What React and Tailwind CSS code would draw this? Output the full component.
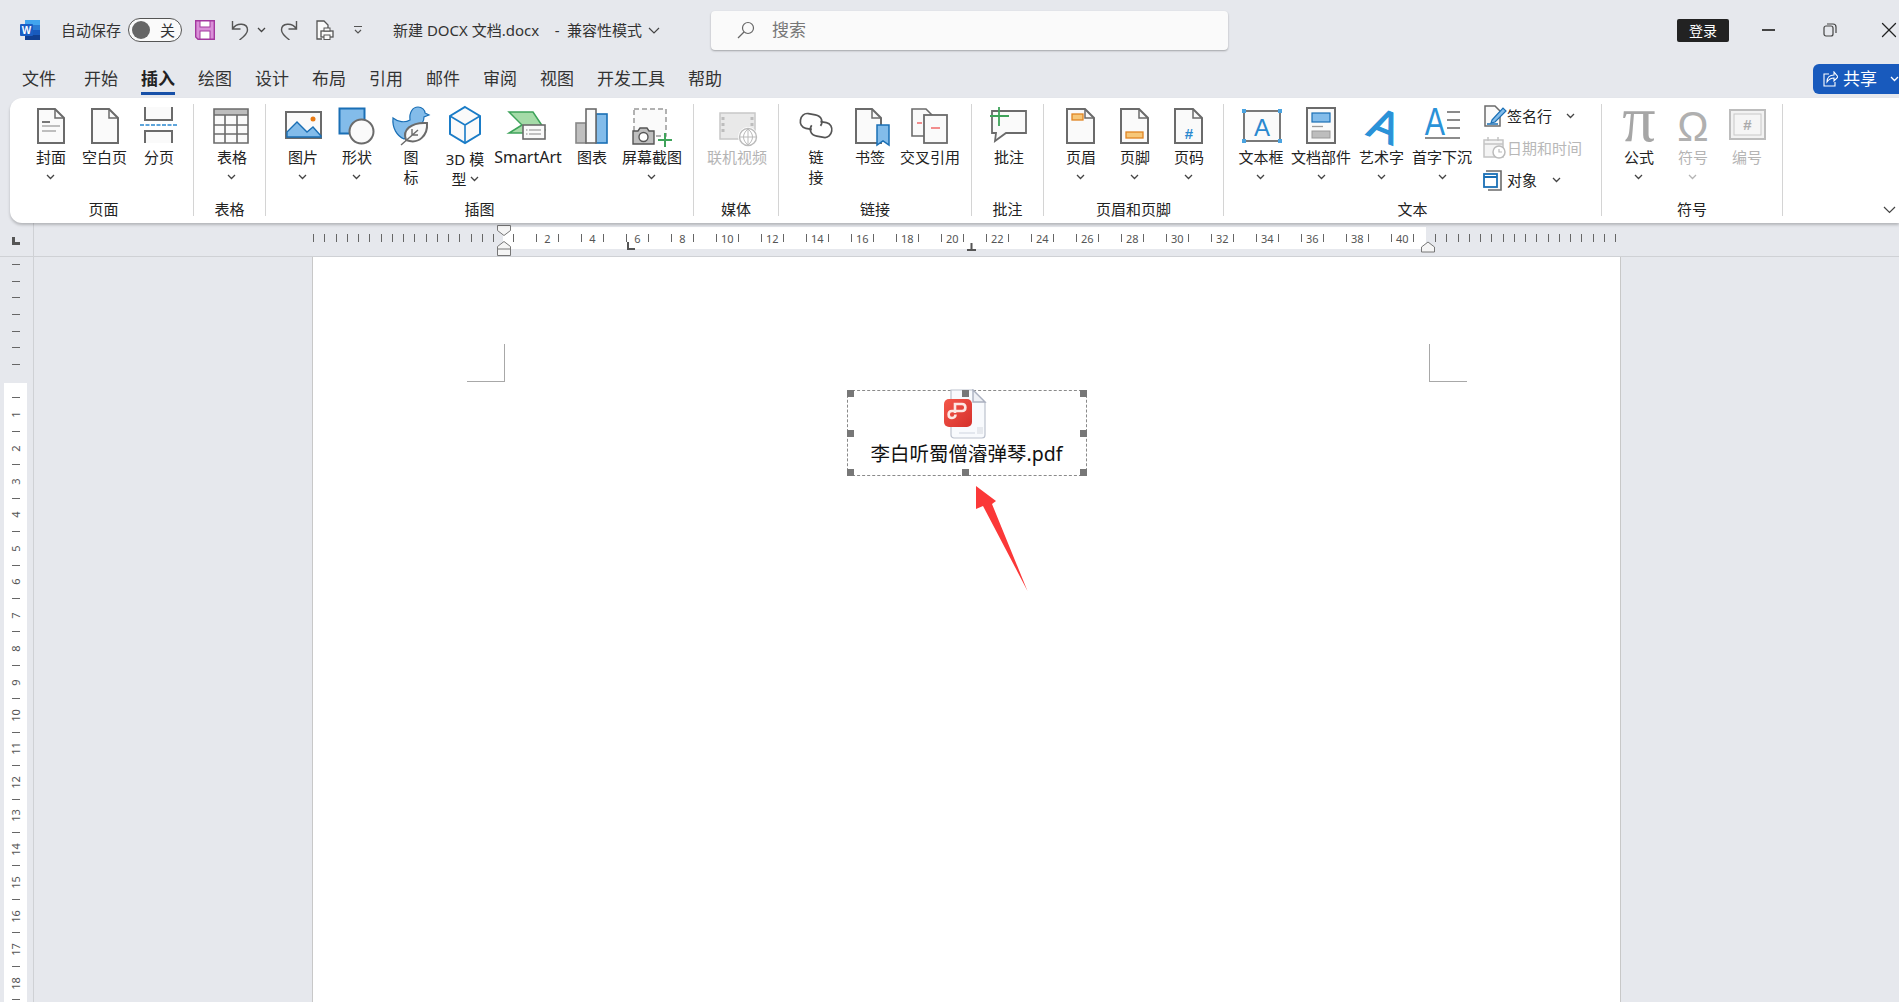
import React from "react";
import { X } from "lucide-react";

const GRAY = "#6b6b6b";
const BLUE = "#1a6fb5";
const SKY = "#83bcea";

function Ic({ children }) {
  return (
    <svg width="40" height="40" viewBox="0 0 40 40" className="overflow-visible shrink-0">
      {children}
    </svg>
  );
}

function Doc({ x = 7, w = 26, children }) {
  return (
    <>
      <path d={`M${x} 3h${w - 9}l9 9v25h-${w}z`} fill="#fafafa" stroke={GRAY} strokeWidth="2" />
      <path d={`M${x + w - 9} 3v9h9`} fill="none" stroke={GRAY} strokeWidth="1.5" />
      {children}
    </>
  );
}

function Chev({ color = "#444" }) {
  return (
    <svg width="9" height="6" viewBox="0 0 9 6" className="shrink-0">
      <path d="M1 1l3.5 3.5L8 1" fill="none" stroke={color} strokeWidth="1.3" />
    </svg>
  );
}

const icons = {
  cover: (
    <Ic>
      <Doc>
        <path d="M11 15h8v2h-8z" fill="#777" />
        <path d="M11 20h18M11 25h14" stroke="#aaa" strokeWidth="1.6" />
      </Doc>
    </Ic>
  ),
  blank: <Ic><Doc /></Ic>,
  pagebreak: (
    <Ic>
      <path d="M6 1v13h27V1M6 37V25h27v12" fill="#fafafa" stroke={GRAY} strokeWidth="2" />
      <path d="M1 19h37" stroke="#2a88cf" strokeWidth="1.5" strokeDasharray="4 1.5" />
    </Ic>
  ),
  table: (
    <Ic>
      <rect x="2" y="3" width="34" height="34" fill="#fafafa" />
      <rect x="2" y="3" width="34" height="6" fill="#bdbdbd" />
      <path d="M2 3h34v34H2zM2 9h34M2 19h34M2 28h34M13 9v28M25 9v28" fill="none" stroke={GRAY} strokeWidth="1.6" />
    </Ic>
  ),
  picture: (
    <Ic>
      <rect x="3" y="6" width="35" height="26" fill="#fafafa" stroke={GRAY} strokeWidth="2" />
      <path d="M4 31V26l10-10 10 10 6-5 8 9v1z" fill={SKY} stroke={BLUE} strokeWidth="1.4" />
      <circle cx="30" cy="13" r="2.5" fill="#e97a12" />
    </Ic>
  ),
  shapes: (
    <Ic>
      <rect x="2.5" y="2.5" width="25" height="25" fill={SKY} stroke={BLUE} strokeWidth="2" />
      <circle cx="24.5" cy="25.5" r="12" fill="#fafafa" stroke={GRAY} strokeWidth="2" />
    </Ic>
  ),
  iconset: (
    <Ic>
      <path d="M2 12c5 4 12 5 17 2-1-8 3-13 8-13 4 0 7 3 7 6l4 2-5 2c0 5-3 8-6 10L13 33C6 30 1 22 2 12z" fill={SKY} stroke={BLUE} strokeWidth="1.2" />
      <path d="M15 34C11 24 20 16 36 17c1 12-8 22-21 17z" fill="#fafafa" stroke={GRAY} strokeWidth="2" />
      <path d="M10 39l17-15M21 29v-6M21 29h6" fill="none" stroke={GRAY} strokeWidth="1.4" />
    </Ic>
  ),
  model: (
    <Ic>
      <path d="M20 1l15 9v18l-15 9-15-9V10z" fill="#fafafa" stroke="#1a7cc7" strokeWidth="2" />
      <path d="M5 10l15 9 15-9M20 19v18" fill="none" stroke="#1a7cc7" strokeWidth="1.6" />
    </Ic>
  ),
  smartart: (
    <Ic>
      <path d="M1 6h24l12 18-7 3H1l13-8z" fill="#a5dba8" stroke="#3ea35a" strokeWidth="1.5" />
      <rect x="15" y="19" width="22" height="14" fill="#fafafa" stroke={GRAY} strokeWidth="1.6" />
      <path d="M21 24h12M21 28h12M18 24h1.5M18 28h1.5" stroke="#888" strokeWidth="1.2" />
    </Ic>
  ),
  chart: (
    <Ic>
      <rect x="4" y="17" width="10" height="20" fill="#bfbfbf" stroke="#888" strokeWidth="1.6" />
      <rect x="24" y="8" width="11" height="29" fill={SKY} stroke={BLUE} strokeWidth="1.6" />
      <rect x="14" y="3" width="10" height="34" fill="#fafafa" stroke={GRAY} strokeWidth="1.6" />
    </Ic>
  ),
  screenshot: (
    <Ic>
      <rect x="2" y="3" width="32" height="27" fill="#fafafa" stroke="#999" strokeWidth="1.5" strokeDasharray="5 3" />
      <path d="M1 25h5l2-3h7l2 3h5v13H1z" fill="#bfbfbf" stroke="#555" strokeWidth="1.4" />
      <circle cx="11.5" cy="31" r="4.5" fill="#fff" stroke="#555" strokeWidth="1.4" />
      <path d="M33 27v14M26 34h14" stroke="#3fa35a" strokeWidth="2" />
    </Ic>
  ),
  video: (
    <Ic>
      <rect x="3" y="7" width="35" height="26" fill="#e9e9e9" stroke="#c8c8c8" strokeWidth="1.5" />
      <path d="M6 11v18M35 11v18" stroke="#bdbdbd" strokeWidth="3" strokeDasharray="3 3" />
      <circle cx="31" cy="31" r="10" fill="#fff" />
      <circle cx="31" cy="31" r="8.5" fill="#fff" stroke="#bbb" strokeWidth="1.4" />
      <path d="M23 31h16M31 23v16M31 23c-6 5-6 11 0 16M31 23c6 5 6 11 0 16" fill="none" stroke="#bbb" strokeWidth="1" />
    </Ic>
  ),
  link: (
    <Ic>
      <path d="M17 23h-6c-9 0-9-15 0-15h7c7 0 9 6 7 10" fill="none" stroke="#555" strokeWidth="1.7" transform="rotate(10 14 16)" />
      <path d="M23 16h6c9 0 9 15 0 15h-7c-7 0-9-6-7-10" fill="none" stroke="#555" strokeWidth="1.7" transform="rotate(10 26 24)" />
    </Ic>
  ),
  bookmark: (
    <Ic>
      <Doc x={6} w={25} />
      <path d="M27 19h12v20l-6-4-6 4z" fill={SKY} stroke={BLUE} strokeWidth="1.5" />
    </Ic>
  ),
  crossref: (
    <Ic>
      <path d="M2 3h14l7 7v20H2z" fill="#fafafa" stroke={GRAY} strokeWidth="1.6" />
      <rect x="14" y="9" width="23" height="28" fill="#fafafa" stroke={GRAY} strokeWidth="1.8" />
      <path d="M7 17h5M21 22h9" stroke="#ef6a6a" strokeWidth="1.6" />
    </Ic>
  ),
  comment: (
    <Ic>
      <path d="M3 5h34v22H17l-11 8 1-8H3z" fill="#fafafa" stroke={GRAY} strokeWidth="1.8" />
      <path d="M10 1v19M1 10h19" stroke="#3fa35a" strokeWidth="1.8" />
    </Ic>
  ),
  header: (
    <Ic>
      <Doc x={6} w={27}>
        <rect x="11" y="8" width="11" height="6" fill="#f6c779" stroke="#e08522" strokeWidth="1.3" />
      </Doc>
    </Ic>
  ),
  footer: (
    <Ic>
      <Doc x={6} w={27}>
        <rect x="11" y="26" width="17" height="6" fill="#f6c779" stroke="#e08522" strokeWidth="1.3" />
      </Doc>
    </Ic>
  ),
  pagenum: (
    <Ic>
      <Doc x={6} w={27}>
        <text x="20" y="33" textAnchor="middle" fontSize="15" fontWeight="700" fontFamily="Liberation Sans" fill="#2a88cf">#</text>
      </Doc>
    </Ic>
  ),
  textbox: (
    <Ic>
      <rect x="3" y="5" width="36" height="30" fill="#fafafa" stroke={GRAY} strokeWidth="1.8" />
      <text x="21" y="30" textAnchor="middle" fontSize="24" fontFamily="Liberation Sans" fill="#2a88cf">A</text>
      <path d="M1 3h4v4H1zM37 3h4v4h-4zM1 33h4v4H1zM37 33h4v4h-4z" fill="#4aa3e0" />
    </Ic>
  ),
  parts: (
    <Ic>
      <rect x="6" y="2" width="28" height="35" fill="#fafafa" stroke={GRAY} strokeWidth="2" />
      <rect x="11" y="7" width="18" height="9" fill={SKY} stroke={BLUE} strokeWidth="1.2" />
      <path d="M11 20.5h11" stroke="#999" strokeWidth="1.3" />
      <rect x="11" y="25" width="18" height="7" fill="#bdbdbd" stroke="#999" strokeWidth="1" />
    </Ic>
  ),
  wordart: (
    <Ic>
      <text x="0" y="0" fontSize="44" fontFamily="Liberation Sans" fill="#2a92d8" stroke="#2a92d8" strokeWidth="1.2" textAnchor="middle" transform="translate(17 34) rotate(22)">A</text>
    </Ic>
  ),
  dropcap: (
    <Ic>
      <text x="0" y="0" textAnchor="middle" fontSize="39" fontFamily="Liberation Sans" fill="#2a92d8" transform="translate(13 29) scale(.78 1)">A</text>
      <path d="M25 6h13M25 14h13M25 22h13" stroke="#666" strokeWidth="1.5" />
      <path d="M3 32h35" stroke="#666" strokeWidth="1.5" />
    </Ic>
  ),
  formula: (
    <Ic>
      <text x="20" y="35" textAnchor="middle" fontSize="66" fontFamily="Liberation Serif" fill="#a6a6a6">π</text>
    </Ic>
  ),
  symbol: (
    <Ic>
      <text x="20" y="35" textAnchor="middle" fontSize="42" fontFamily="Liberation Sans" fill="#b0b0b0">Ω</text>
    </Ic>
  ),
  number: (
    <Ic>
      <rect x="3" y="4" width="35" height="29" fill="#f2f2f2" stroke="#bdbdbd" strokeWidth="2" />
      <rect x="7" y="8" width="27" height="21" fill="#f5f5f5" stroke="#c8c8c8" strokeWidth="1" />
      <text x="20.5" y="24" textAnchor="middle" fontSize="15" fontWeight="700" fontFamily="Liberation Sans" fill="#aaa">#</text>
    </Ic>
  ),
};

const groups = [
  {
    label: "页面", cls: "w-[184px]", pad: "pl-[14px]", labelCls: "pl-[4px]",
    items: [
      { w: "w-[54px]", lines: ["封面"], icon: "cover", chev: true },
      { w: "w-[53px]", lines: ["空白页"], icon: "blank" },
      { w: "w-[56px]", lines: ["分页"], icon: "pagebreak" },
    ],
  },
  {
    label: "表格", cls: "w-[72px]", pad: "pl-[4px]",
    items: [{ w: "w-[68px]", lines: ["表格"], icon: "table", chev: true }],
  },
  {
    label: "插图", cls: "w-[428px]", pad: "pl-[10px]",
    items: [
      { w: "w-[54px]", lines: ["图片"], icon: "picture", chev: true },
      { w: "w-[54px]", lines: ["形状"], icon: "shapes", chev: true },
      { w: "w-[54px]", lines: ["图", "标"], icon: "iconset" },
      { w: "w-[54px]", lines: ["3D 模", "型"], icon: "model", inlineChev: true },
      { w: "w-[72px]", lines: ["SmartArt"], icon: "smartart", text: "text-[16px]" },
      { w: "w-[56px]", lines: ["图表"], icon: "chart" },
      { w: "w-[64px]", lines: ["屏幕截图"], icon: "screenshot", chev: true },
    ],
  },
  {
    label: "媒体", cls: "w-[85px]", pad: "pl-[11px]",
    items: [{ w: "w-[64px]", lines: ["联机视频"], icon: "video", gray: true }],
  },
  {
    label: "链接", cls: "w-[193px]", pad: "pl-[13px]",
    items: [
      { w: "w-[48px]", lines: ["链", "接"], icon: "link" },
      { w: "w-[60px]", lines: ["书签"], icon: "bookmark" },
      { w: "w-[60px]", lines: ["交叉引用"], icon: "crossref" },
    ],
  },
  {
    label: "批注", cls: "w-[72px]", pad: "pl-[7px]",
    items: [{ w: "w-[60px]", lines: ["批注"], icon: "comment" }],
  },
  {
    label: "页眉和页脚", cls: "w-[180px]", pad: "pl-[10px]",
    items: [
      { w: "w-[54px]", lines: ["页眉"], icon: "header", chev: true },
      { w: "w-[54px]", lines: ["页脚"], icon: "footer", chev: true },
      { w: "w-[54px]", lines: ["页码"], icon: "pagenum", chev: true },
    ],
  },
  {
    label: "文本", cls: "w-[378px]", pad: "pl-[7px]", small: true,
    items: [
      { w: "w-[60px]", lines: ["文本框"], icon: "textbox", chev: true },
      { w: "w-[60px]", lines: ["文档部件"], icon: "parts", chev: true },
      { w: "w-[61px]", lines: ["艺术字"], icon: "wordart", chev: true },
      { w: "w-[60px]", lines: ["首字下沉"], icon: "dropcap", chev: true },
    ],
  },
  {
    label: "符号", cls: "w-[181px]", pad: "pl-[10px]",
    items: [
      { w: "w-[54px]", lines: ["公式"], icon: "formula", chev: true },
      { w: "w-[54px]", lines: ["符号"], icon: "symbol", chev: true, gray: true },
      { w: "w-[54px]", lines: ["编号"], icon: "number", gray: true },
    ],
  },
];

function RibbonBtn({ w, lines, icon, chev, inlineChev, gray, text = "text-[15px]" }) {
  return (
    <div className={`${w} shrink-0 flex flex-col items-center`}>
      {icons[icon]}
      <div className={`mt-[1px] flex flex-col items-center ${text} leading-[20px] whitespace-nowrap ${gray ? "text-[#b4b4b4]" : "text-[#222]"} ${inlineChev ? "pt-[2px]" : ""}`}>
        {lines.map((l, i) => (
          <div key={i} className="h-[20px] flex items-center gap-[3px]">
            {l}
            {inlineChev && i === 1 && <Chev />}
          </div>
        ))}
        {chev && (
          <div className="h-[20px] flex items-center">
            <Chev color={gray ? "#b4b4b4" : "#444"} />
          </div>
        )}
      </div>
    </div>
  );
}

function SmallCol() {
  return (
    <div className="ml-[11px] -mt-[6px] flex flex-col text-[15px]">
      <div className="h-[32px] flex items-center text-[#222]">
        <svg width="24" height="22" viewBox="0 0 24 22" className="shrink-0">
          <path d="M2 1h10l5 5v15H2z" fill="#fafafa" stroke={GRAY} strokeWidth="1.5" />
          <path d="M9 15L20 3l3 3-11 11-4 1z" fill={SKY} stroke={BLUE} strokeWidth="1.2" />
          <path d="M4 19h11" stroke={BLUE} strokeWidth="1.5" />
        </svg>
        <span>签名行</span>
        <span className="ml-[14px]"><Chev /></span>
      </div>
      <div className="h-[32px] flex items-center text-[#b8b8b8]">
        <svg width="24" height="22" viewBox="0 0 24 22" className="shrink-0">
          <rect x="1" y="3" width="19" height="17" fill="#f4f4f4" stroke="#c4c4c4" strokeWidth="1.5" />
          <path d="M1 7h19M5 0v4M15 0v4" stroke="#c4c4c4" strokeWidth="1.5" />
          <circle cx="16" cy="15" r="6" fill="#fff" stroke="#bbb" strokeWidth="1.5" />
          <path d="M16 12v3h3" fill="none" stroke="#bbb" strokeWidth="1.2" />
        </svg>
        <span>日期和时间</span>
      </div>
      <div className="h-[32px] flex items-center text-[#222]">
        <svg width="24" height="22" viewBox="0 0 24 22" className="shrink-0">
          <path d="M3 2h15v19H5" fill="#fafafa" stroke={GRAY} strokeWidth="1.6" />
          <rect x="1" y="5" width="13" height="13" fill="#fff" stroke={BLUE} strokeWidth="1.8" />
          <path d="M1 8h13" stroke={BLUE} strokeWidth="2" />
        </svg>
        <span>对象</span>
        <span className="ml-[15px]"><Chev /></span>
      </div>
    </div>
  );
}

function TitleBar() {
  return (
    <div className="h-[60px] flex items-center pl-[20px] text-[15px] text-[#333]">
      <svg width="20" height="20" viewBox="0 0 20 20" className="shrink-0">
        <rect x="5" y="0" width="15" height="5" fill="#41a5ee" />
        <rect x="5" y="5" width="15" height="5" fill="#2b7cd3" />
        <rect x="5" y="10" width="15" height="5" fill="#185abd" />
        <rect x="5" y="15" width="15" height="5" fill="#103f91" />
        <rect x="0" y="4" width="13" height="12" rx="1" fill="#1a5ec4" />
        <text x="6.5" y="13.5" textAnchor="middle" fontSize="10" fontWeight="700" fontFamily="Liberation Sans" fill="#fff">W</text>
      </svg>
      <span className="ml-[21px] whitespace-nowrap">自动保存</span>
      <div className="ml-[7px] w-[54px] h-[24px] rounded-full border border-[#555] bg-[#fafafa] flex items-center pl-[3px] shrink-0">
        <div className="w-[18px] h-[18px] rounded-full bg-[#666]" />
        <span className="ml-[10px] text-[15px] leading-none">关</span>
      </div>
      <svg width="20" height="20" viewBox="0 0 20 20" className="ml-[13px] shrink-0">
        <path d="M.7.7h18.6v18.6H3L.7 17z" fill="#d98fd8" stroke="#a3389f" strokeWidth="1.4" />
        <rect x="5" y="1" width="10" height="6" fill="#fff" stroke="#a3389f" />
        <rect x="5" y="11" width="10" height="8" fill="#fff" stroke="#a3389f" />
      </svg>
      <svg width="18" height="20" viewBox="0 0 18 20" className="ml-[16px] shrink-0">
        <path d="M1.5 1v8h8M1.5 9C6 2 16.5 3 16.5 10c0 4-4 7-8 10" fill="none" stroke="#555" strokeWidth="1.4" />
      </svg>
      <span className="ml-[8px]"><Chev /></span>
      <svg width="18" height="20" viewBox="0 0 18 20" className="ml-[14px] shrink-0">
        <path d="M16.5 1v8h-8M16.5 9C12 2 1.5 3 1.500 10c0 4 4 7 8 10" fill="none" stroke="#555" strokeWidth="1.4" />
      </svg>
      <svg width="18" height="20" viewBox="0 0 18 20" className="ml-[18px] shrink-0">
        <path d="M6 19H1V1h7l4 4v4" fill="#fafafa" stroke="#555" strokeWidth="1.3" />
        <rect x="5" y="11" width="12" height="6" fill="#fafafa" stroke="#555" strokeWidth="1.3" />
        <rect x="8" y="8" width="6" height="3" fill="#fafafa" stroke="#555" />
        <rect x="8" y="15" width="6" height="4.5" fill="#fafafa" stroke="#555" />
      </svg>
      <svg width="10" height="10" viewBox="0 0 10 10" className="ml-[19px] shrink-0">
        <path d="M1 1.5h8M2 5l3 3 3-3" fill="none" stroke="#555" strokeWidth="1.2" />
      </svg>
      <span className="ml-[30px] whitespace-pre w-[174px] shrink-0">新建 DOCX 文档.docx    -</span>
      <span className="whitespace-nowrap shrink-0">兼容性模式</span>
      <span className="ml-[6px] shrink-0">
        <svg width="12" height="7" viewBox="0 0 12 7"><path d="M1 1l5 5 5-5" fill="none" stroke="#444" strokeWidth="1.2" /></svg>
      </span>
      <div className="ml-[51px] w-[517px] h-[39px] rounded-[4px] bg-[#fafafa] shadow-[0_1px_2px_rgba(0,0,0,0.3)] flex items-center pl-[26px] shrink-0">
        <svg width="18" height="18" viewBox="0 0 18 18" className="shrink-0">
          <circle cx="11" cy="7" r="5.5" fill="none" stroke="#666" strokeWidth="1.2" />
          <path d="M7 11l-6 6" stroke="#666" strokeWidth="1.3" />
        </svg>
        <span className="ml-[17px] text-[17px] text-[#777]">搜索</span>
      </div>
      <div className="ml-auto w-[52px] h-[23px] bg-[#222] rounded-[2px] text-white text-[14px] flex items-center justify-center shrink-0">登录</div>
      <div className="ml-[33px] w-[13px] h-[1.5px] bg-[#444] shrink-0" />
      <svg width="14" height="14" viewBox="0 0 14 14" className="ml-[48px] shrink-0">
        <rect x="1" y="3" width="9" height="10" rx="2" fill="none" stroke="#444" strokeWidth="1.2" />
        <path d="M4 1h6c2 0 3 1 3 3v6" fill="none" stroke="#444" strokeWidth="1.2" />
      </svg>
      <X size={26} strokeWidth={1.2} color="#222" className="ml-[39px] -mr-[3px] shrink-0" />
    </div>
  );
}

const tabs = ["文件", "开始", "插入", "绘图", "设计", "布局", "引用", "邮件", "审阅", "视图", "开发工具", "帮助"];

function TabBar() {
  return (
    <div className="h-[38px] flex items-start pl-[22px]">
      <div className="flex gap-[23px]">
        {tabs.map((t) => (
          <div key={t} className={`pt-[7px] flex flex-col ${t === "文件" ? "mr-[5px]" : ""}`}>
            <div className={`text-[17px] leading-[24px] whitespace-nowrap ${t === "插入" ? "font-bold text-[#222]" : "text-[#333]"}`}>{t}</div>
            {t === "插入" && <div className="mt-[1px] h-[3px] bg-[#1750a8]" />}
          </div>
        ))}
      </div>
      <div className="ml-auto mt-[4px] w-[86px] h-[30px] bg-[#185abd] rounded-l-[6px] flex items-center pl-[10px] text-white text-[17px] shrink-0">
        <svg width="15" height="16" viewBox="0 0 15 16" className="shrink-0">
          <path d="M6 3H1v12h11v-4M4 11c0-5 3-7 7-7V1l4 5-4 4V7c-3 0-5 1-7 4z" fill="none" stroke="#fff" strokeWidth="1.1" />
        </svg>
        <span className="ml-[5px]">共享</span>
        <span className="ml-[13px]"><Chev color="#fff" /></span>
      </div>
    </div>
  );
}

function Ribbon() {
  return (
    <div className="relative ml-[10px] h-[125px] bg-white rounded-l-[12px] shadow-[0_2px_3px_rgba(0,0,0,0.22)] pt-[6px] flex z-10">
      {groups.map((g) => (
        <div key={g.label} className={`${g.cls} h-[112px] shrink-0 border-r border-[#d4d4d4]`}>
          <div className={`h-[95px] pt-[2px] flex ${g.pad}`}>
            {g.items.map((it, i) => (
              <RibbonBtn key={i} {...it} />
            ))}
            {g.small && <SmallCol />}
          </div>
          <div className={`h-[20px] text-[15px] leading-[20px] text-[#222] text-center ${g.labelCls || ""}`}>{g.label}</div>
        </div>
      ))}
      <div className="ml-auto mr-[3px] mt-[102px]">
        <svg width="13" height="8" viewBox="0 0 13 8"><path d="M1 1l5.5 5.5L12 1" fill="none" stroke="#444" strokeWidth="1.2" /></svg>
      </div>
    </div>
  );
}

function Tick({ cls = "justify-center" }) {
  return (
    <div className={`w-[11.25px] h-full flex items-center shrink-0 ${cls}`}>
      <div className="w-[1px] h-[8px] bg-[#666]" />
    </div>
  );
}

function HRuler() {
  const nums = [];
  for (let n = 2; n <= 40; n += 2) nums.push(n);
  return (
    <div className="relative h-[34px] flex border-b border-[#cfd1d5]">
      <div className="w-[34px] shrink-0 border-r border-[#cfd1d5] pt-[14px] pl-[12px]">
        <div className="w-[8px] h-[8px] border-l-[3px] border-b-[3px] border-[#555]" />
      </div>
      <div className="ml-[279px] mt-[4px] h-[22px] w-[190px] flex shrink-0">
        {Array.from({ length: 17 }).map((_, i) => (
          <Tick key={i} cls="justify-start" />
        ))}
      </div>
      <div className="mt-[4px] h-[22px] w-[923px] bg-white flex pl-[5px] shrink-0">
        {nums.map((n) => (
          <React.Fragment key={n}>
            <Tick />
            <div className="w-[11.25px] shrink-0" />
            <Tick />
            <div className="w-[11.25px] shrink-0 flex justify-center items-center text-[11px] leading-none text-[#555]">{n}</div>
          </React.Fragment>
        ))}
        <Tick />
      </div>
      <div className="mt-[4px] h-[22px] flex pl-[9px] shrink-0">
        {Array.from({ length: 17 }).map((_, i) => (
          <Tick key={i} cls="justify-start" />
        ))}
      </div>

      {/* indent markers */}
      <svg width="16" height="33" viewBox="0 0 16 33" className="absolute left-[496px] top-0">
        <path d="M1.5 2.5h13v5l-6.5 5-6.5-5z" fill="#f5f5f5" stroke="#777" />
        <path d="M8 18.5l6.5 5V32.5h-13v-9zM1.5 26h13" fill="#f5f5f5" stroke="#777" />
      </svg>
      <svg width="16" height="12" viewBox="0 0 16 12" className="absolute left-[1420px] top-[18px]">
        <path d="M8 1l6.5 5v5h-13V6z" fill="#f5f5f5" stroke="#777" />
      </svg>
      <div className="absolute left-[627px] top-[19px] w-[8px] h-[8px] border-l-[2px] border-b-[2px] border-[#555]" />
      <svg width="9" height="8" viewBox="0 0 9 8" className="absolute left-[967px] top-[20px]">
        <path d="M4.5 0v6M0 7h9" stroke="#555" strokeWidth="2" />
      </svg>
    </div>
  );
}

function VTick() {
  return (
    <div className="h-[16.72px] flex items-center justify-center shrink-0">
      <div className="w-[8px] h-[1px] bg-[#666]" />
    </div>
  );
}

function VRuler() {
  return (
    <div className="w-[34px] shrink-0 border-r border-[#cfd1d5] pl-[4px] flex flex-col">
      <div className="w-[23px] h-[126px] -mt-[1px] shrink-0 mb-[1px]">
        {Array.from({ length: 7 }).map((_, i) => (
          <VTick key={i} />
        ))}
      </div>
      <div className="w-[23px] flex-1 bg-white pt-[6.5px] overflow-hidden">
        {Array.from({ length: 18 }).map((_, i) => (
          <React.Fragment key={i}>
            <VTick />
            <div className="h-[16.72px] flex items-center justify-center shrink-0">
              <span className="-rotate-90 text-[11px] leading-none text-[#555]">{i + 1}</span>
            </div>
          </React.Fragment>
        ))}
        <VTick />
      </div>
    </div>
  );
}

function Handle({ cls }) {
  return <div className={`absolute w-[7px] h-[7px] bg-[#777] ${cls}`} />;
}

function Page() {
  return (
    <div className="relative ml-[278px] w-[1309px] bg-white border-x border-[#c8c8c8] shrink-0 pt-[87px] overflow-hidden">
      <div className="flex justify-between pl-[154px] pr-[153px]">
        <div className="w-[38px] h-[38px] border-r border-b border-[#a8a8a8]" />
        <div className="w-[38px] h-[38px] border-l border-b border-[#a8a8a8]" />
      </div>
      <div className="relative ml-[534px] mt-[8px] w-[240px] h-[86px] border border-dashed border-[#8a8a8a] flex flex-col items-center">
        <svg width="44" height="50" viewBox="0 0 44 50" className="-mt-[2px] -ml-[4px] shrink-0">
          <defs>
            <linearGradient id="pdfRed" x1="0" y1="0" x2="1" y2="1">
              <stop offset="0" stopColor="#f4574a" />
              <stop offset="1" stopColor="#d5302b" />
            </linearGradient>
          </defs>
          <path d="M8 1h22l12 12v33a3 3 0 0 1-3 3H11a3 3 0 0 1-3-3z" fill="#f8fafd" stroke="#bcc2ce" strokeWidth="1.2" />
          <path d="M30 1v12h12z" fill="#eef0f5" stroke="#aab0bf" strokeWidth="1.4" />
          <path d="M34 38h6v7h-6z" fill="#e6e9ee" />
          <path d="M16 44h16" stroke="#dde1e8" strokeWidth="1.5" />
          <rect x="1" y="10" width="28" height="28" rx="5" fill="url(#pdfRed)" />
          <path d="M12 24v-9h7c4.500 0 4.500 7 0 7H9c-4.500 0-4.500 7 0 7 2.500 0 3.500-1.500 3.500-3.500" fill="none" stroke="#fde7e3" strokeWidth="2.6" />
        </svg>
        <div className="mt-[1px] -ml-[1px] text-[19.5px] leading-[28px] text-[#111] whitespace-nowrap">李白听蜀僧濬弹琴.pdf</div>
        <Handle cls="-left-[1px] -top-[1px]" />
        <Handle cls="left-[114px] -top-[1px]" />
        <Handle cls="-right-[1px] -top-[1px]" />
        <Handle cls="-left-[1px] top-[39px]" />
        <Handle cls="-right-[1px] top-[39px]" />
        <Handle cls="-left-[1px] -bottom-[1px]" />
        <Handle cls="left-[114px] -bottom-[1px]" />
        <Handle cls="-right-[1px] -bottom-[1px]" />
      </div>
      <svg width="52" height="106" viewBox="0 0 52 106" className="absolute left-[663px] top-[229px]">
        <path d="M0 0L20 15l-4 3L51.500 105 7 20 0 23z" fill="#fb3838" />
      </svg>
    </div>
  );
}

export default function App() {
  return (
    <div className="h-[1002px] w-[1899px] overflow-hidden bg-[#e6e8ed] flex flex-col font-['Noto_Sans','Noto_Sans_CJK_SC',sans-serif]">
      <TitleBar />
      <TabBar />
      <Ribbon />
      <HRuler />
      <div className="flex flex-1 min-h-0">
        <VRuler />
        <Page />
      </div>
    </div>
  );
}
